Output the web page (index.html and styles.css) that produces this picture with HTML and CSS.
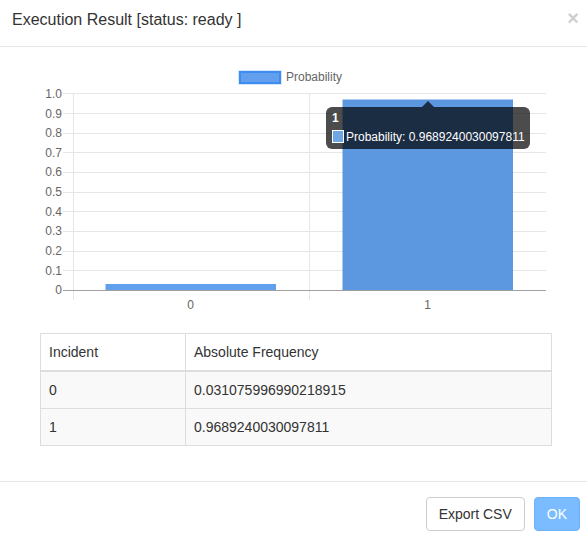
FILE: index.html
```html
<!DOCTYPE html>
<html>
<head>
<meta charset="utf-8">
<link rel="stylesheet" href="styles.css">
</head>
<body>
<div class="modal">
  <header class="modal-header">
    <h4 class="modal-title">Execution Result [status: ready ]</h4>
    <span class="close">&times;</span>
  </header>
  <div class="modal-body">
    <svg class="chart" width="587" height="276" viewBox="0 47 587 276" xmlns="http://www.w3.org/2000/svg">
      <!-- legend -->
      <rect x="238.5" y="70.5" width="43" height="14" fill="#a9cdfa"/>
      <rect x="240" y="72" width="40" height="11" fill="#62a0ee" stroke="#3f8cf0" stroke-width="2"/>
      <text x="286" y="81" class="lbl">Probability</text>
      <!-- horizontal grid -->
      <g stroke="#e6e6e6" stroke-width="1">
        <line x1="63" y1="93.5" x2="546" y2="93.5"/>
        <line x1="63" y1="113.5" x2="546" y2="113.5"/>
        <line x1="63" y1="133.5" x2="546" y2="133.5"/>
        <line x1="63" y1="152.5" x2="546" y2="152.5"/>
        <line x1="63" y1="172.5" x2="546" y2="172.5"/>
        <line x1="63" y1="192.5" x2="546" y2="192.5"/>
        <line x1="63" y1="211.5" x2="546" y2="211.5"/>
        <line x1="63" y1="231.5" x2="546" y2="231.5"/>
        <line x1="63" y1="251.5" x2="546" y2="251.5"/>
        <line x1="63" y1="270.5" x2="546" y2="270.5"/>
        <line x1="73.5" y1="93" x2="73.5" y2="300"/>
        <line x1="309.5" y1="93" x2="309.5" y2="300"/>
      </g>
      <!-- y labels -->
      <g class="lbl" text-anchor="end">
        <text x="62" y="97.5">1.0</text>
        <text x="62" y="117.5">0.9</text>
        <text x="62" y="137">0.8</text>
        <text x="62" y="156.5">0.7</text>
        <text x="62" y="176">0.6</text>
        <text x="62" y="196">0.5</text>
        <text x="62" y="215.5">0.4</text>
        <text x="62" y="235">0.3</text>
        <text x="62" y="255">0.2</text>
        <text x="62" y="274.5">0.1</text>
        <text x="62" y="294">0</text>
      </g>
      <!-- bars -->
      <rect x="105.5" y="284" width="170.5" height="6" fill="#62a0ee"/>
      <rect x="342.5" y="99.5" width="170.5" height="190.5" fill="#5b98e0"/>
      <!-- zero axis -->
      <line x1="63" y1="290.5" x2="546" y2="290.5" stroke="#a0a0a0" stroke-width="1"/>
      <!-- x labels -->
      <g class="lbl" text-anchor="middle">
        <text x="190.5" y="309">0</text>
        <text x="427.5" y="309">1</text>
      </g>
      <!-- tooltip -->
      <g>
        <path d="M422 107 L428 101 L434 107 Z" fill="rgba(0,0,0,0.7)"/>
        <rect x="326" y="107" width="204" height="42" rx="6" ry="6" fill="rgba(0,0,0,0.7)"/>
        <text x="332" y="122" class="tt tt-title">1</text>
        <rect x="332.5" y="130.5" width="11" height="12" fill="#6fa6e6" stroke="#ffffff" stroke-width="1"/>
        <text x="346" y="140.5" class="tt">Probability: 0.9689240030097811</text>
      </g>
    </svg>
    <table class="result-table">
      <thead>
        <tr><th class="col-inc">Incident</th><th>Absolute Frequency</th></tr>
      </thead>
      <tbody>
        <tr><td>0</td><td>0.031075996990218915</td></tr>
        <tr><td>1</td><td>0.9689240030097811</td></tr>
      </tbody>
    </table>
  </div>
  <footer class="modal-footer">
    <button class="btn btn-default">Export CSV</button>
    <button class="btn btn-primary">OK</button>
  </footer>
</div>
</body>
</html>
```

FILE: styles.css
```css
html, body {
  margin: 0;
  padding: 0;
  background: #ffffff;
}
body {
  font-family: "Liberation Sans", Arial, sans-serif;
  color: #333333;
  font-size: 14px;
  line-height: 20px;
  width: 587px;
  height: 541px;
  overflow: hidden;
}
.modal {
  width: 587px;
}
.modal-header {
  display: flex;
  justify-content: space-between;
  align-items: flex-start;
  padding: 10px 8px 16px 12px;
  height: 20px;
  border-bottom: 1px solid #e5e5e5;
}
.modal-title {
  margin: 0;
  font-size: 16px;
  font-weight: normal;
  line-height: 20px;
  color: #333333;
}
.close {
  font-size: 20px;
  font-weight: bold;
  line-height: 17px;
  color: #cfcfcf;
}
.modal-body {
  padding: 0 35px 35px 0;
}
.chart {
  display: block;
}
.lbl {
  font-family: "Liberation Sans", Arial, sans-serif;
  font-size: 12px;
  fill: #666666;
}
.tt {
  font-family: "Liberation Sans", Arial, sans-serif;
  font-size: 12px;
  fill: #ffffff;
}
.tt-title {
  font-weight: bold;
}
.result-table {
  margin: 10px 0 0 40px;
  width: 512px;
  border-collapse: collapse;
  border-spacing: 0;
}
.result-table th,
.result-table td {
  border: 1px solid #dddddd;
  padding: 8px;
  text-align: left;
  font-weight: normal;
  line-height: 20px;
  vertical-align: top;
}
.result-table th {
  border-bottom: 2px solid #dddddd;
  background: #ffffff;
}
.result-table .col-inc {
  width: 128px;
}
.result-table tbody td {
  background: #f9f9f9;
}
.modal-footer {
  border-top: 1px solid #e5e5e5;
  padding: 15px 7px 15px 15px;
  display: flex;
  justify-content: flex-end;
  gap: 9px;
}
.btn {
  font-family: "Liberation Sans", Arial, sans-serif;
  font-size: 14px;
  line-height: 20px;
  padding: 6px 12px;
  border-radius: 4px;
  border: 1px solid #cccccc;
  background: #ffffff;
  color: #333333;
  margin: 0;
}
.btn-primary {
  background: #7abcff;
  border-color: #6ab2fb;
  color: #ffffff;
}
```
